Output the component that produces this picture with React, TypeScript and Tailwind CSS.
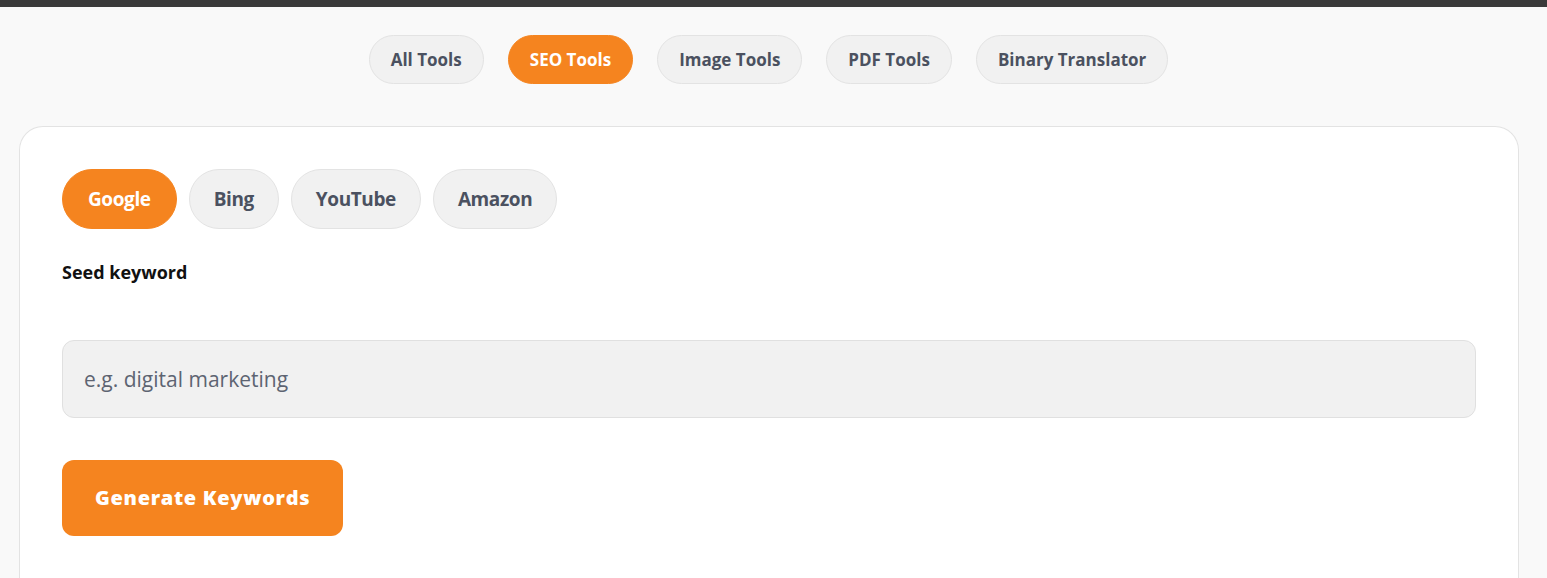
import { useState } from "react";

const categories = ["All Tools", "SEO Tools", "Image Tools", "PDF Tools", "Binary Translator"];
const engines = ["Google", "Bing", "YouTube", "Amazon"];

export default function App() {
  const [category, setCategory] = useState("SEO Tools");
  const [engine, setEngine] = useState("Google");
  const [seed, setSeed] = useState("");

  return (
    <div className="min-h-[578px] bg-[#f9f9f9] font-['Open_Sans','Noto_Sans',sans-serif]">
      <div className="h-[7px] bg-[#3a3a3a]" />

      {/* category nav */}
      <nav className="flex justify-center gap-6 pt-7 pr-[10px]">
        {categories.map((c) => (
          <button
            key={c}
            onClick={() => setCategory(c)}
            className={
              c === category
                ? "h-[49px] rounded-full border border-[#f5841f] bg-[#f5841f] px-[21px] text-[17px] font-bold text-white"
                : "h-[49px] rounded-full border border-[#e3e3e3] bg-[#f1f1f1] px-[21px] text-[17px] font-bold text-[#4b5160]"
            }
          >
            {c}
          </button>
        ))}
      </nav>

      <div className="pl-[19px] pt-[42px]">
        <section className="w-[1500px] rounded-t-[24px] border border-b-0 border-[#e3e3e3] bg-white px-[42px] pt-[42px] pb-16">
          <div className="flex gap-3">
            {engines.map((e) => (
              <button
                key={e}
                onClick={() => setEngine(e)}
                className={
                  e === engine
                    ? "h-[60px] rounded-full border border-[#f5841f] bg-[#f5841f] px-[25px] text-[19px] font-bold tracking-[-0.4px] text-white"
                    : "h-[60px] rounded-full border border-[#e3e3e3] bg-[#f1f1f1] px-[24px] text-[19px] font-bold tracking-[-0.4px] text-[#4b5160]"
                }
              >
                {e}
              </button>
            ))}
          </div>

          <label htmlFor="seed" className="mt-[30px] block text-[18px] font-bold text-[#111]">
            Seed keyword
          </label>

          <input
            id="seed"
            value={seed}
            onChange={(ev) => setSeed(ev.target.value)}
            placeholder="e.g. digital marketing"
            className="mt-[54px] block h-[78px] w-full rounded-xl border border-[#e0e0e0] bg-[#f1f1f1] px-[21px] text-[21px] text-[#111] outline-none placeholder:text-[#5d6472]"
          />

          <button className="mt-[42px] h-[76px] rounded-xl bg-[#f5841f] px-[33px] text-[20px] font-extrabold tracking-[0.7px] text-white">
            Generate Keywords
          </button>
        </section>
      </div>
    </div>
  );
}
